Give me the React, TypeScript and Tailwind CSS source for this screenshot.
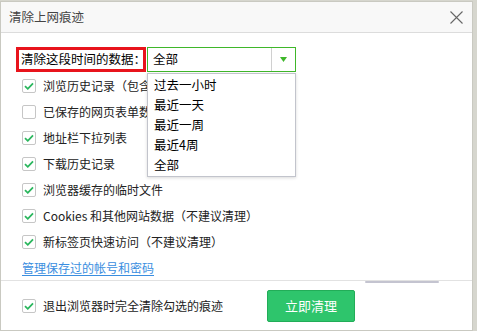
import { useState } from 'react';

const font = { fontFamily: '"Noto Sans CJK SC", "Microsoft YaHei", sans-serif' };

const items = [
  { label: '浏览历史记录（包含', checked: true },
  { label: '已保存的网页表单数据', checked: false },
  { label: '地址栏下拉列表', checked: true },
  { label: '下载历史记录', checked: true },
  { label: '浏览器缓存的临时文件', checked: true },
  { label: 'Cookies 和其他网站数据（不建议清理）', checked: true },
  { label: '新标签页快速访问（不建议清理）', checked: true },
];

const ranges = ['过去一小时', '最近一天', '最近一周', '最近4周', '全部'];

function Check({ on }: { on: boolean }) {
  return (
    <span className="w-[14px] h-[14px] shrink-0 rounded-[2px] border border-[#c6c6c6] bg-white flex items-center justify-center">
      {on && (
        <svg width="10" height="8" viewBox="0 0 10 8">
          <path d="M1 4.2 L3.8 6.8 L9 1.4" fill="none" stroke="#2bb75e" strokeWidth="1.8" />
        </svg>
      )}
    </span>
  );
}

export default function App() {
  const [checks, setChecks] = useState(items.map((i) => i.checked));
  const [exitClear, setExitClear] = useState(true);

  return (
    <div className="w-[477px] h-[331px] bg-[#d6d6ce] overflow-hidden" style={font}>
      <div className="mt-[1px] w-[473px] h-[330px] bg-white border border-[#c9c9c1] flex flex-col relative">
        {/* Header */}
        <div className="h-[31px] shrink-0 bg-[#f8f8f8] border-b border-[#dcdcdc] flex items-center justify-between pl-[8px] pr-[8px]">
          <span className="text-[12.5px] text-[#444] leading-none">清除上网痕迹</span>
          <svg width="13" height="13" viewBox="0 0 13 13" className="mr-[1px]">
            <path d="M0.5 0.5 L12.5 12.5 M12.5 0.5 L0.5 12.5" stroke="#666" strokeWidth="1.1" />
          </svg>
        </div>

        {/* Body */}
        <div className="flex-1 px-[15px] pt-[14px]">
          <div className="flex items-center h-[25px]">
            <div className="w-[130px] h-[25px] border-[3px] border-[#e8141c] flex items-center pl-[2px] text-[12.5px] text-black leading-none whitespace-nowrap">
              清除这段时间的数据：
            </div>
            <div className="ml-[1px] w-[149px] h-[25px] border border-[#3fb72a] flex items-center justify-between text-[12.5px] text-black">
              <span className="pl-[5px]">全部</span>
              <span className="w-[24px] h-[23px] border-l border-[#d0d0d0] flex items-center justify-center">
                <svg width="7" height="5" viewBox="0 0 7 5">
                  <path d="M0 0 L7 0 L3.5 5 Z" fill="#3fb72a" />
                </svg>
              </span>
            </div>
          </div>

          <div className="pt-[1px] pl-[6px]">
            {items.map((it, i) => (
              <label
                key={it.label}
                className="h-[26px] flex items-center gap-[7px] text-[12px] text-[#222] cursor-pointer whitespace-nowrap"
                onClick={() => setChecks(checks.map((c, j) => (j === i ? !c : c)))}
              >
                <Check on={checks[i]} />
                <span className="leading-none">{it.label}</span>
              </label>
            ))}
            <a className="mt-[7px] block text-[12px] leading-none text-[#3a8ee0] underline underline-offset-2">
              管理保存过的帐号和密码
            </a>
          </div>
        </div>

        {/* Footer */}
        <div className="h-[50px] shrink-0 border-t border-[#e2e2e2] flex items-center pl-[21px]">
          <label className="flex items-center gap-[7px] text-[12px] text-[#222] cursor-pointer whitespace-nowrap" onClick={() => setExitClear(!exitClear)}>
            <Check on={exitClear} />
            <span className="leading-none">退出浏览器时完全清除勾选的痕迹</span>
          </label>
          <button className="ml-[44px] w-[88px] h-[32px] rounded-[2px] bg-[#2ec56c] border border-[#22ad58] text-white text-[13px]">
            立即清理
          </button>
        </div>
        <div className="absolute left-[364px] top-[279px] w-[74px] h-[2px] rounded-full bg-[#c4c4d0]" />

        {/* Dropdown menu */}
        <div className="absolute left-[146px] top-[71px] w-[149px] border border-[#c2c4cc] bg-white shadow-[0_1px_3px_rgba(0,0,0,0.15)] py-[1px]">
          {ranges.map((r) => (
            <div key={r} className="h-[20px] flex items-center pl-[6px] text-[12.5px] text-black leading-none">
              {r}
            </div>
          ))}
        </div>
      </div>
    </div>
  );
}
